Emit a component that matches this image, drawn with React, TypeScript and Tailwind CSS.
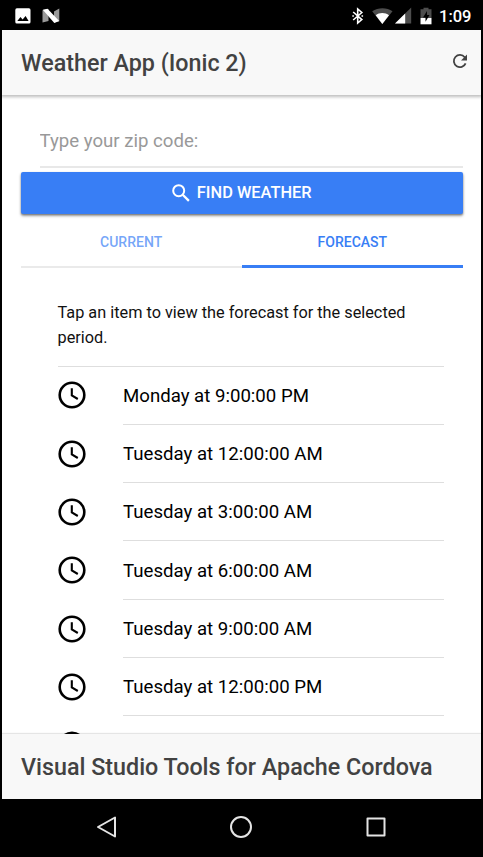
import React from "react";

const periods = [
  "Monday at 9:00:00 PM",
  "Tuesday at 12:00:00 AM",
  "Tuesday at 3:00:00 AM",
  "Tuesday at 6:00:00 AM",
  "Tuesday at 9:00:00 AM",
  "Tuesday at 12:00:00 PM",
];

function StatusBar() {
  return (
    <div className="flex h-[30px] shrink-0 items-center bg-black pl-[13px] pr-[8px] text-white">
      <svg width="16" height="16" viewBox="0 0 16 16" className="mt-[2px]">
        <rect x="0.3" y="0.3" width="15.2" height="15.2" rx="1.6" fill="#fff" />
        <path d="M2.3 13 5.5 9l2.1 2.5L10.6 8l3 5z" fill="#000" />
      </svg>
      <svg width="19" height="16" viewBox="0 0 19 16" className="ml-[11px] mt-[2px]">
        <path d="M.5 2.2 6.5 1v12L.5 14.4zM12 3.5 17.3 .6v12.6L12 14.5z" fill="#999" />
        <path d="M.8 1.8 5.5 .7 17.2 13 12.3 15z" fill="#fff" />
      </svg>
      <div className="flex-1" />
      <svg width="12" height="18" viewBox="0 0 12 18" className="mt-[2px]" fill="none" stroke="#fff" strokeWidth="1.6">
        <path d="M1.2 5 9.8 12.6 5.7 16V2L9.8 5.5 1.2 13" />
        <path d="M.3 9h1.6M9.5 9h1.6" />
      </svg>
      <svg width="21" height="18" viewBox="0 0 21 18" className="ml-[8px] mt-[2px]">
        <path d="M.2 4.3C6 .3 15 .3 20.5 4.3L10.3 17z" fill="#4d4d4d" />
        <path d="M3.7 8.3C7.3 5.3 13.3 5.3 17 8.3L10.3 17z" fill="#fff" />
      </svg>
      <svg width="17" height="17" viewBox="0 0 17 17" className="ml-[2px] mt-[1px]">
        <path d="M16.2.5v16H0z" fill="#4d4d4d" />
        <path d="M10.2 6.4v10.1H0z" fill="#fff" />
      </svg>
      <svg width="12" height="18" viewBox="0 0 12 18" className="ml-[8px] mt-[1px]">
        <path d="M.5 2.2h3V.7h5v1.5h3V11H.5z" fill="#4d4d4d" />
        <path d="M.5 11h11v6.3H.5z" fill="#fff" />
        <path d="M7 4 3 10.4h2.5v4.4l4-6.7H7z" fill="#000" />
      </svg>
      <span className="ml-[7px] mt-[3px] w-[34px] whitespace-nowrap text-[16.5px] font-medium leading-[20px]">1:09</span>
    </div>
  );
}

function ClockIcon() {
  return (
    <svg width="28" height="28" viewBox="0 0 28 28" className="mb-[0.5px] shrink-0" fill="none" stroke="#000">
      <circle cx="14" cy="14" r="12.3" strokeWidth="2.6" />
      <path d="M13.8 7.2v7.3l6 3.5" strokeWidth="2.1" />
    </svg>
  );
}

export default function App() {
  return (
    <div className="flex h-[857px] w-[483px] flex-col overflow-hidden bg-black px-[2px] font-['Roboto',sans-serif]">
      <StatusBar />
      <header className="z-10 flex h-[65px] shrink-0 items-center justify-between bg-[#f8f8f8] pl-[19px] pr-[9px] shadow-[0_1px_3px_1px_rgba(0,0,0,0.26)] [clip-path:inset(0_0_-6px_0)]">
        <h1 className="text-[23.3px] font-medium leading-[30px] text-[#424242]">Weather App (Ionic 2)</h1>
        <svg width="24" height="24" viewBox="0 0 24 24" className="mt-[-3px]" fill="none" stroke="#424242" strokeWidth="1.8">
          <path d="M17.6 14.3A6.1 6.1 0 1 1 16.7 8.2L18 9.6" />
          <path d="M19 5.5v6h-6z" fill="#424242" stroke="none" />
        </svg>
      </header>

      <main className="flex min-h-0 flex-1 flex-col overflow-hidden bg-white pl-[18.5px] pr-[18px]">
        <div className="ml-[19px] mt-[19px] flex h-[54px] shrink-0 items-center border-b-2 border-[#e8e8e8]">
          <input
            className="mt-[1px] w-full bg-transparent text-[18.64px] leading-[24px] outline-none placeholder:text-[#999]"
            placeholder="Type your zip code:"
          />
        </div>
        <button className="mt-[4px] flex h-[42px] shrink-0 items-center justify-center rounded-[2px] bg-[#387ef5] text-[16.4px] font-medium text-white shadow-[0_2px_3px_0_rgba(0,0,0,0.35),0_1px_2px_0_rgba(0,0,0,0.3)]">
          <svg width="18" height="18" viewBox="0 0 18 18" className="mr-[7px]" fill="none" stroke="#fff" strokeWidth="2">
            <circle cx="6.7" cy="6.7" r="5.5" />
            <path d="m10.7 10.7 6.2 6.2" strokeWidth="2.3" />
          </svg>
          <span className="leading-[20px]">FIND WEATHER</span>
        </button>
        <div className="flex h-[54px] shrink-0 text-[14px] font-medium">
          <div className="flex flex-1 items-center justify-center border-b-2 border-[#eaeaea] pt-[4px] text-[#387ef5]/70">CURRENT</div>
          <div className="flex flex-1 items-center justify-center border-b-[3px] border-[#387ef5] pt-[5px] text-[#387ef5]">FORECAST</div>
        </div>

        <section className="ml-[37px] mr-[19px] shrink-0">
          <p className="flex h-[98.6px] items-end border-b border-[#dedede] pb-[15.5px] text-[16.3px] leading-[24.5px] text-[#111]">
            Tap an item to view the forecast for the selected period.
          </p>
          <ul>
            {periods.map((period) => (
              <li key={period} className="flex h-[58.3px] items-center">
                <ClockIcon />
                <span className="ml-[37.5px] flex h-full flex-1 items-center border-b border-[#dedede] pt-[3px] text-[18.64px] text-black">
                  {period}
                </span>
              </li>
            ))}
            <li className="flex h-[58.3px] items-center">
              <ClockIcon />
            </li>
          </ul>
        </section>
      </main>

      <footer className="z-10 flex h-[65px] shrink-0 items-center bg-[#f8f8f8] pl-[19px] shadow-[0_-1px_1px_0_rgba(0,0,0,0.1)]">
        <h2 className="text-[23.3px] font-medium leading-[30px] text-[#424242]">Visual Studio Tools for Apache Cordova</h2>
      </footer>
      <nav className="z-10 flex h-[58px] shrink-0 items-center bg-black pb-[2px] pl-[94px]">
        <svg width="24" height="24" viewBox="0 0 24 24" fill="none" stroke="#e4e4e4" strokeWidth="2" strokeLinejoin="round">
          <path d="M19 2.5v19L2 12z" />
        </svg>
        <svg width="24" height="24" viewBox="0 0 24 24" className="ml-[109px]" fill="none" stroke="#e4e4e4" strokeWidth="2">
          <circle cx="12" cy="12" r="10" />
        </svg>
        <svg width="24" height="24" viewBox="0 0 24 24" className="ml-[111px]" fill="none" stroke="#e4e4e4" strokeWidth="2" strokeLinejoin="round">
          <path d="M3.5 3.5h17v17h-17z" />
        </svg>
      </nav>
    </div>
  );
}
